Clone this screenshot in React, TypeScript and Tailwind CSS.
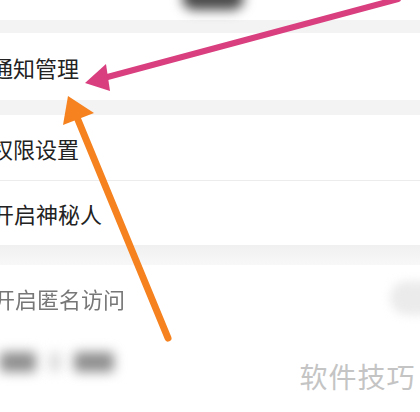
import React from "react";

export default function App() {
  const font = { fontFamily: '"Noto Sans CJK SC", "Noto Sans", sans-serif' };
  return (
    <div className="relative w-[420px] h-[412px] overflow-hidden bg-[#fdfdfd]" style={font}>
      <div className="flex flex-col">
        <div className="h-[20px] bg-white flex">
          <div className="ml-[182px] -mt-[14px] w-[62px] h-[24px] rounded-full bg-[#4a4a4a] blur-[6px]" />
        </div>
        <div className="h-[13px] bg-[#f3f3f3]" />
        <div className="h-[67px] bg-white flex items-center">
          <span className="-ml-[9px] text-[22px] leading-none text-[#222]">通知管理</span>
        </div>
        <div className="h-[15px] bg-[#f3f3f3]" />
        <div className="h-[65px] bg-white flex items-center">
          <span className="-ml-[9px] text-[22px] leading-none text-[#222]">权限设置</span>
        </div>
        <div className="h-px bg-[#ececec]" />
        <div className="h-[64px] bg-white flex items-center">
          <span className="-ml-[8px] text-[22px] leading-none text-[#222]">开启神秘人</span>
        </div>
        <div className="h-[20px] bg-gradient-to-b from-[#f0f0f0] to-[#f8f8f8]" />
        <div className="h-[65px] bg-white flex items-center justify-between">
          <span className="-ml-[7px] text-[22px] leading-none text-[#777] blur-[0.6px]">开启匿名访问</span>
          <div className="-mr-[20px] w-[50px] h-[34px] rounded-full bg-[#ebebeb] blur-[5px]" />
        </div>
        <div className="h-[82px] bg-white flex items-start pt-[22px] gap-[14px]">
          <div className="w-[36px] h-[20px] rounded bg-[#8f8f8f] blur-[6px]" />
          <div className="w-[10px] h-[20px] rounded bg-[#d5d5d5] blur-[6px]" />
          <div className="w-[40px] h-[20px] rounded bg-[#8f8f8f] blur-[6px]" />
        </div>
      </div>

      <div className="absolute left-[295px] top-[350px] w-[125px] h-[52px] bg-white flex items-center justify-center">
        <span className="text-[28px] leading-none text-[#c4c4c4] tracking-[1px]">软件技巧</span>
      </div>

      <svg className="absolute left-0 top-0" width="420" height="412" viewBox="0 0 420 412">
        <line x1="398" y1="-1" x2="100" y2="79" stroke="#d93e7e" strokeWidth="6" strokeLinecap="round" />
        <polygon points="85,83 106,64 110,91" fill="#d93e7e" />
        <line x1="168" y1="338" x2="76" y2="115" stroke="#f5821f" strokeWidth="7" strokeLinecap="round" />
        <polygon points="68,96 63,125 94,113" fill="#f5821f" />
      </svg>
    </div>
  );
}
